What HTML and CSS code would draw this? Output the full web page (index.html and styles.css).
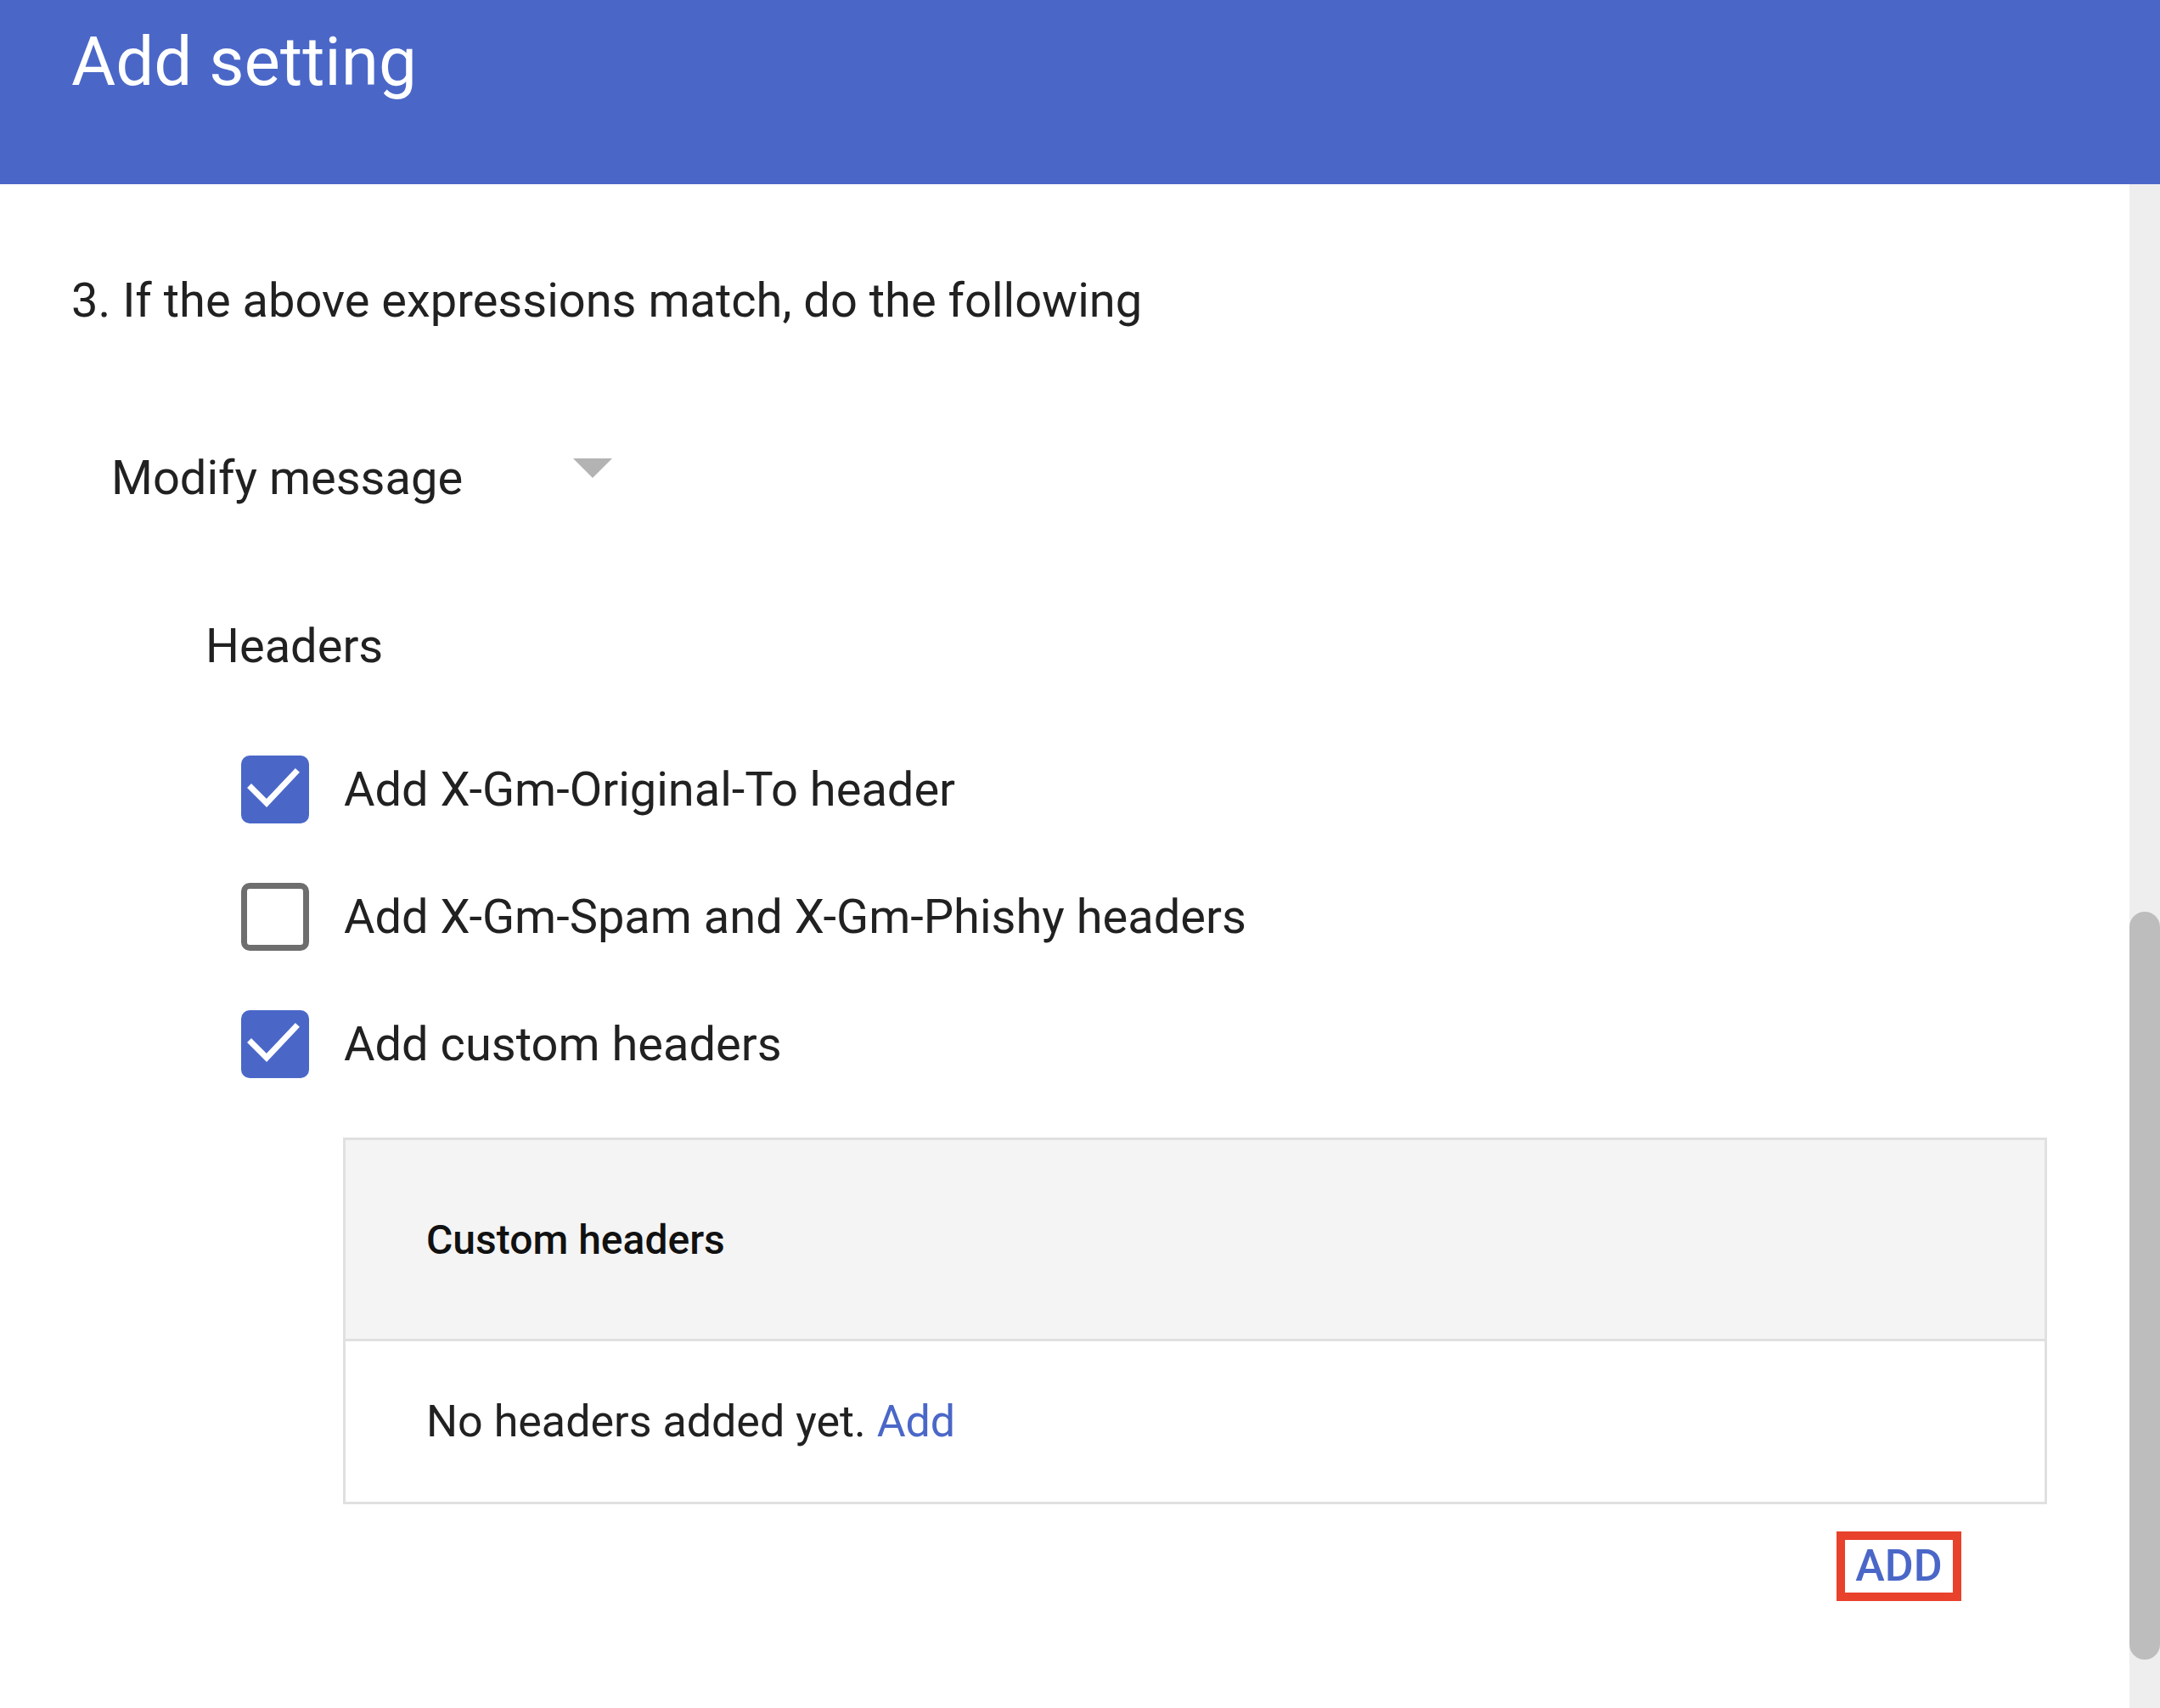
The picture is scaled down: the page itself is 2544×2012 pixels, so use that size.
FILE: index.html
```html
<!DOCTYPE html>
<html lang="en">
<head>
<meta charset="utf-8">
<title>Add setting</title>
<link rel="stylesheet" href="styles.css">
</head>
<body>
<div class="app">
  <header class="appbar">
    <h1 class="title">Add setting</h1>
  </header>
  <div class="main">
    <div class="content">
      <p class="step">3. If the above expressions match, do the following</p>
      <div class="select">
        <span class="select-value">Modify message</span>
        <span class="arrow"></span>
      </div>
      <div class="section-label">Headers</div>
      <ul class="checks">
        <li class="check-row">
          <span class="cb cb-on"><svg viewBox="0 0 80 80" width="80" height="80"><polyline points="12,38 30,56 64,20" fill="none" stroke="#fff" stroke-width="7" stroke-linecap="square"/></svg></span>
          <span class="label">Add X-Gm-Original-To header</span>
        </li>
        <li class="check-row">
          <span class="cb cb-off"></span>
          <span class="label">Add X-Gm-Spam and X-Gm-Phishy headers</span>
        </li>
        <li class="check-row">
          <span class="cb cb-on"><svg viewBox="0 0 80 80" width="80" height="80"><polyline points="12,38 30,56 64,20" fill="none" stroke="#fff" stroke-width="7" stroke-linecap="square"/></svg></span>
          <span class="label">Add custom headers</span>
        </li>
      </ul>
      <div class="table-wrap">
        <div class="table">
          <div class="thead">Custom headers</div>
          <div class="tbody">No headers added yet. <a class="link">Add</a></div>
        </div>
        <div class="actions">
          <button class="add-btn">ADD</button>
        </div>
      </div>
    </div>
    <div class="scrollbar"><div class="thumb"></div></div>
  </div>
</div>
</body>
</html>
```
FILE: styles.css
```css
html, body {
  margin: 0;
  height: 100%;
  overflow: hidden;
  background: #fff;
}
body {
  font-family: Roboto, "Noto Sans", sans-serif;
  color: #212121;
}
.appbar {
  height: 217px;
  box-sizing: border-box;
  background: #4a67c8;
  padding: 25px 0 0 84px;
}
.title {
  margin: 0;
  font-size: 80px;
  font-weight: 400;
  line-height: 96px;
  color: #fff;
}
.main {
  display: flex;
  height: 1795px;
}
.content {
  flex: 1;
  padding: 105px 0 0 84px;
}
.step {
  margin: 0;
  font-size: 56px;
  line-height: 64px;
}
.select {
  display: flex;
  justify-content: space-between;
  align-items: flex-start;
  width: 590px;
  margin: 145px 0 0 47px;
  font-size: 56px;
  line-height: 64px;
}
.arrow {
  width: 0;
  height: 0;
  border-left: 23px solid transparent;
  border-right: 23px solid transparent;
  border-top: 23px solid #b3b3b3;
  margin-top: 9px;
}
.section-label {
  margin: 134px 0 0 158px;
  font-size: 56px;
  line-height: 64px;
}
.checks {
  list-style: none;
  margin: 97px 0 0 200px;
  padding: 0;
  display: flex;
  flex-direction: column;
  gap: 70px;
}
.check-row {
  display: flex;
  align-items: center;
  gap: 41px;
  height: 80px;
}
.cb {
  width: 80px;
  height: 80px;
  box-sizing: border-box;
  border-radius: 10px;
  flex: none;
  display: block;
}
.cb svg { display: block; }
.cb-on { background: #4a67c8; }
.cb-off { border: 7px solid #6e6e6e; }
.label {
  font-size: 56px;
  line-height: 80px;
}
.table-wrap {
  margin: 70px 97px 0 320px;
}
.table {
  border: 3px solid #e0e0e0;
}
.thead {
  height: 237px;
  box-sizing: border-box;
  background: #f4f4f4;
  border-bottom: 3px solid #e0e0e0;
  display: flex;
  align-items: center;
  padding-left: 95px;
  font-size: 48px;
  font-weight: 500;
  color: #111;
}
.tbody {
  height: 189px;
  line-height: 189px;
  padding-left: 95px;
  font-size: 52px;
}
.link {
  color: #4a67c8;
  text-decoration: none;
}
.actions {
  display: flex;
  justify-content: flex-end;
  padding-right: 101px;
  margin-top: 32px;
}
.add-btn {
  width: 147px;
  height: 82px;
  box-sizing: border-box;
  border: 10px solid #e8412c;
  background: #fff;
  color: #4a67c8;
  font-family: Roboto, "Noto Sans", sans-serif;
  font-size: 52px;
  font-weight: 500;
  line-height: 62px;
  padding: 0;
}
.scrollbar {
  width: 36px;
  flex: none;
  background: #eeeeee;
}
.thumb {
  margin-top: 857px;
  height: 881px;
  background: #bdbdbd;
  border-radius: 18px;
}
```
